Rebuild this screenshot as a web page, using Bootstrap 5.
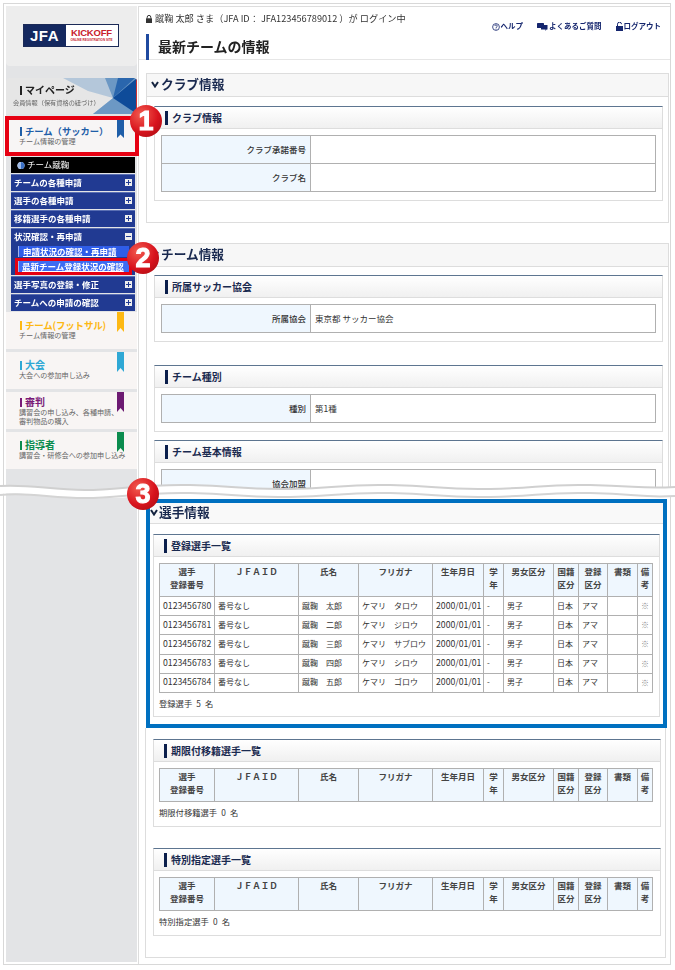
<!DOCTYPE html>
<html lang="ja">
<head>
<meta charset="utf-8">
<title>最新チームの情報</title>
<link href="https://cdn.jsdelivr.net/npm/bootstrap@5.3.0/dist/css/bootstrap.min.css" rel="stylesheet">
<style>
html,body{background:#fff;margin:0;}
body{font-family:"Noto Sans CJK JP","Liberation Sans",sans-serif;font-size:8px;color:#333;line-height:1.2;}
.shot{position:relative;width:675px;height:970px;overflow:hidden;filter:blur(.4px);}
.frame{margin:3px 0 0 3px;width:668px;height:962px;border:1px solid #d8d8d8;padding-top:2px;}
.side{width:131px;margin-left:2px;background:#e3e4e6;flex:none;height:956px;}
.logo-zone{height:60px;background:#ededed;border-radius:0 0 4px 4px;padding:0 2px 2px 0;}
.logo{width:96px;height:23px;border:1px solid #1b2a57;background:#fff;}
.logo-l{width:42px;background:#14285f;color:#fff;font:700 15px/21px "Liberation Sans",sans-serif;letter-spacing:.5px;text-align:center;}
.logo-r{flex:1;text-align:center;color:#c8202c;font:700 9.5px/11px "Liberation Sans",sans-serif;padding-top:2px;letter-spacing:-.2px;}
.logo-r span{display:block;font-size:3px;line-height:4px;letter-spacing:0;}
.mypage{position:relative;height:36px;margin-top:12px;background:#e6e6e6;overflow:hidden;border-radius:4px 4px 0 0;padding:6px 0 0 14px;}
.mypage svg{position:absolute;right:0;top:0;}
.mypage .ttl,.mypage .dsc{position:relative;}
.ttl{font-weight:700;font-size:10px;line-height:12px;white-space:nowrap;}
.ttl::before{content:"";display:inline-block;width:2px;height:9px;background:currentColor;margin-right:3px;vertical-align:-1px;}
.dsc{font-size:7.1px;line-height:8.5px;color:#666;white-space:nowrap;margin-left:-1px;}
.mypage .ttl{color:#222;}
.mypage .dsc{font-size:6.2px;margin:3px 0 0 -7px;}
.tile{position:relative;height:37px;margin-bottom:3px;background:#f8f5f4;padding:7px 0 0 14px;}
.tile-high{padding-top:4px;}
.rib{position:absolute;right:13px;top:0;width:7px;height:20px;clip-path:polygon(0 0,100% 0,100% 100%,50% 80%,0 100%);}
.tile-soccer{height:40px;margin:2px 0 0 -1px;width:134px;border:4px solid #e60012;padding:5px 0 0 11px;background:#f7f5f5;}
.tile-soccer .ttl{font-size:9.3px;}
.tile-soccer .rib{right:11px;top:0;height:18px;}
.futsal{font-size:9.5px;letter-spacing:-.2px;}
.c-soc{color:#1f5ea8;}.bg-soc{background:#1f5ea8;}
.c-fut{color:#fdb813;}.bg-fut{background:#fdb813;}
.c-tai{color:#2fa8d5;}.bg-tai{background:#2fa8d5;}
.c-shi{color:#7a1a78;}.bg-shi{background:#6c1a72;}
.c-gui{color:#0b8c4e;}.bg-gui{background:#0b8c4e;}
.side-menu{margin:0 2px 0 5px;width:124px;}
.team-bar{height:16px;margin-top:1px;background:#000;color:#fff;font-size:8.5px;line-height:15px;padding-left:6px;}
.team-bar svg{vertical-align:-2px;margin-right:2px;}
.mi{display:flex;justify-content:space-between;align-items:center;height:17px;margin-top:1px;background:#213a92;color:#fff;font-weight:700;font-size:8.5px;padding:0 3px 1px 3px;border-top:1px solid #5a6fb3;}
.pm{width:7px;height:7px;background:#eee;position:relative;flex:none;}
.pm::before{content:"";position:absolute;left:1px;right:1px;top:3px;height:1px;background:#213a92;}
.pm.plus::after{content:"";position:absolute;top:1px;bottom:1px;left:3px;width:1px;background:#213a92;}
.subwrap{background:#213a92;height:30px;padding:1px 6px 0 7px;}
.si{display:block;height:11px;line-height:11px;background:#2f5de8;color:#fff;font-weight:700;font-size:8.5px;padding-left:4px;white-space:nowrap;border-left:1px solid #9fb4ee;}
.si.on{margin-top:4px;outline:3px solid #e60012;background:#3d6cf2;padding-left:3px;}
.tiles{margin-top:1px;}
.mainc{flex:1;min-width:0;margin-left:1px;border-left:1px solid #ddd;border-top:1px solid #ddd;background:#fff;}
.top-cut{height:485px;overflow:hidden;padding-left:7px;}
.head-row{height:53px;margin:0 0 13px -7px;padding-left:7px;border-bottom:1px solid #e6e6e6;position:relative;}
.login{padding:6px 0 0 0;font-size:9.2px;line-height:11px;color:#333;white-space:nowrap;}
.login svg{vertical-align:-1px;margin-right:3px;}
.links{gap:14px;padding:14px 9px 0 0;color:#15266e;font-weight:700;font-size:7.5px;line-height:10px;}
.links a{color:inherit;text-decoration:none;}
.links svg{vertical-align:-1.5px;margin-right:1px;}
.ptitle{height:26px;border-left:3px solid #1f4aa0;padding-left:9px;font-size:14px;font-weight:700;line-height:24px;color:#222;position:absolute;top:27px;left:7px;white-space:nowrap;}
.sec-head{height:24px;width:523px;background:#f7f7f7;border:1px solid #ddd;font-size:12.7px;font-weight:700;color:#1a2a50;padding:0 0 2px 4px;display:flex;align-items:center;gap:2px;}
.sec-body{width:523px;border:1px solid #ddd;border-top:0;padding:9px 5px 0 7px;}
.pnl{border:1px solid #ddd;border-top:1px solid #5d7590;border-radius:0;}
.pnl .card-header{height:22px;padding:0 0 0 10px;background:linear-gradient(#fff,#f0f0f0);border:0;border-bottom:1px solid #ddd;border-radius:0;font-size:10px;font-weight:700;color:#1a2a50;display:flex;align-items:center;gap:4px;}
.pnl .card-header::before{content:"";width:3px;height:14px;background:#0b1f4c;flex:none;}
.pnl .card-body{padding:6px 6px 8px 6px;}
.dtbl{margin:0;table-layout:fixed;width:100%;border:1px solid #a5a5a5;font-size:8.5px;}
.dtbl th,.dtbl td{border:1px solid #b0b0b0;padding:0 4px;box-shadow:none;color:#333;height:28px;background:#fff;vertical-align:middle;}
.dtbl th{width:149px;background:#eff7fe;text-align:right;font-weight:500;font-size:8.5px;}
.sec-a{padding-bottom:21px;margin-bottom:20px;}
.sec-b{height:300px;padding-top:8px;}
.sp-a{margin-bottom:23px;}
.sp-b{margin-bottom:8px;}
.ltbl{margin:0;table-layout:fixed;width:493px;border:1px solid #a5a5a5;font-size:8px;}
.ltbl th,.ltbl td{border:1px solid #b0b0b0;padding:0 3px;color:#333;background:#fff;white-space:nowrap;vertical-align:middle;overflow:hidden;}
.ltbl th{background:#eff7fe;height:33px;text-align:center;font-weight:700;font-size:8.5px;line-height:13px;white-space:normal;padding:1px 2px 0;vertical-align:top;color:#444;}
.ltbl td{height:19.2px;line-height:12px;padding-bottom:1px;}
.ltbl td.num{font-size:8.7px;}
.ltbl td.ctr{text-align:center;color:#888;padding:0;}
.c1{width:55px}.c2{width:84px}.c3{width:60px}.c4{width:74px}.c5{width:51px}.c6{width:20px}.c7{width:50px}.c8{width:25px}.c9{width:29px}.c10{width:30px}.c11{width:15px}
.blue{margin:7px 0 0 7px;width:521px;height:229px;border:4px solid #0070c0;background:#fff;}
.blue .sec-head{width:auto;border:0;border-bottom:1px solid #ddd;height:21px;padding-left:0;gap:1px;background:#f9f9f9;}
.blue .pnl{margin:10px 3px 0 3px;height:183px;}
.pcard .card-body{padding:6px 7px 0 5px;}
.cnt{margin-top:4px;font-size:8.3px;line-height:12px;color:#333;}
.lower{margin-left:6px;width:521px;height:230px;border:1px solid #ddd;border-top:0;padding:11px 4px 0 7px;}
.lower .pnl{height:88px;margin-bottom:21px;}
.wave{position:absolute;left:0;top:482px;}
.badge-num{position:absolute;width:32px;height:32px;border-radius:50%;background:radial-gradient(circle at 35% 30%,#f25c50,#d8131d 55%,#a00b10);color:#fff;font:700 27px/32px "Liberation Sans",sans-serif;text-align:center;-webkit-text-stroke:1px #fff;}
.b1{left:130px;top:105px;}.b2{left:127px;top:242px;}.b3{left:127px;top:478px;}
</style>
</head>
<body>
<div class="shot">
<div class="frame d-flex">
  <aside class="side">
    <div class="logo-zone d-flex align-items-center justify-content-center">
      <div class="logo d-flex"><div class="logo-l">JFA</div><div class="logo-r">KICKOFF<span>ONLINE REGISTRATION SITE</span></div></div>
    </div>
    <div class="mypage">
      <svg width="74" height="36" viewBox="0 0 74 36"><polygon points="0,0 74,0 74,36 30,36 50,20 25,13" fill="#b4c7da"/><polygon points="42,0 74,0 74,36 30,36 50,20" fill="#6c98c4"/><polygon points="50,20 74,0 74,36" fill="#0e4b99"/><polygon points="50,20 55,0 72,0" fill="#2a66ad"/><rect x="73" width="1" height="36" fill="#c33"/></svg>
      <div class="ttl">マイページ</div>
      <div class="dsc">会員情報（保有資格の紐づけ）</div>
    </div>
    <div class="tile tile-soccer">
      <div class="ttl c-soc">チーム（サッカー）</div>
      <div class="dsc">チーム情報の管理</div>
      <div class="rib bg-soc"></div>
    </div>
    <div class="side-menu">
      <div class="team-bar"><svg width="8" height="9" viewBox="0 0 8 9"><circle cx="4" cy="4.5" r="3.5" fill="#fff"/><path d="M4 1a3.5 3.5 0 0 1 0 7z" fill="#3a6fc4"/><path d="M4 1a3.5 3.5 0 0 0 0 7z" fill="#9db9e6"/></svg>チーム蹴鞠</div>
      <div class="mi">チームの各種申請<span class="pm plus"></span></div>
      <div class="mi">選手の各種申請<span class="pm plus"></span></div>
      <div class="mi">移籍選手の各種申請<span class="pm plus"></span></div>
      <div class="mi">状況確認・再申請<span class="pm"></span></div>
      <div class="subwrap"><a class="si">申請状況の確認・再申請</a><a class="si on">最新チーム登録状況の確認</a></div>
      <div class="mi">選手写真の登録・修正<span class="pm plus"></span></div>
      <div class="mi">チームへの申請の確認<span class="pm plus"></span></div>
    </div>
    <div class="tiles">
      <div class="tile"><div class="ttl c-fut futsal">チーム(フットサル)</div><div class="dsc">チーム情報の管理</div><div class="rib bg-fut"></div></div>
      <div class="tile"><div class="ttl c-tai">大会</div><div class="dsc">大会への参加申し込み</div><div class="rib bg-tai"></div></div>
      <div class="tile tile-high"><div class="ttl c-shi">審判</div><div class="dsc">講習会の申し込み、各種申請、<br>審判物品の購入</div><div class="rib bg-shi"></div></div>
      <div class="tile"><div class="ttl c-gui">指導者</div><div class="dsc">講習会・研修会への参加申し込み</div><div class="rib bg-gui"></div></div>
    </div>
  </aside>
  <main class="mainc">
    <div class="top-cut">
      <div class="head-row d-flex justify-content-between">
        <div class="login"><svg width="6" height="8" viewBox="0 0 6 8"><path d="M1.2 3.5V2.2a1.8 1.8 0 0 1 3.6 0v1.3" fill="none" stroke="#333"/><rect y="3.3" width="6" height="4.7" fill="#333"/></svg>蹴鞠 太郎 さま（JFA ID： JFA123456789012 ）が ログイン中</div>
        <div class="links d-flex">
          <a href="#"><svg width="8" height="8" viewBox="0 0 8 8"><circle cx="4" cy="4" r="3.4" fill="none" stroke="#15266e" stroke-width=".8"/><path d="M2.8 3a1.2 1.2 0 1 1 1.6 1.2L4 5" fill="none" stroke="#15266e" stroke-width=".8"/><circle cx="4" cy="6" r=".5" fill="#15266e"/></svg>ヘルプ</a>
          <a href="#"><svg width="11" height="8" viewBox="0 0 11 8"><rect width="7" height="5" rx=".6" fill="#15266e"/><path d="M4 2h6.5v4.5H9.5L8.5 8V6.5H4z" fill="#15266e"/></svg>よくあるご質問</a>
          <a href="#"><svg width="7" height="9" viewBox="0 0 7 9"><path d="M1.5 4V2.2a2 2 0 0 1 4 0" fill="none" stroke="#15266e"/><rect y="4" width="7" height="5" fill="#15266e"/></svg>ログアウト</a>
        </div>
        <div class="ptitle">最新チームの情報</div>
      </div>
      <div class="sec-head"><svg width="8" height="7" viewBox="0 0 8 7"><path d="M1 1l3 4.5L7 1" fill="none" stroke="#14233f" stroke-width="2"/></svg>クラブ情報</div>
      <div class="sec-body sec-a">
        <div class="card pnl">
          <div class="card-header">クラブ情報</div>
          <div class="card-body">
            <table class="table dtbl"><tr><th>クラブ承諾番号</th><td></td></tr><tr><th>クラブ名</th><td></td></tr></table>
          </div>
        </div>
      </div>
      <div class="sec-head"><svg width="8" height="7" viewBox="0 0 8 7"><path d="M1 1l3 4.5L7 1" fill="none" stroke="#14233f" stroke-width="2"/></svg>チーム情報</div>
      <div class="sec-body sec-b">
        <div class="card pnl sp-a">
          <div class="card-header">所属サッカー協会</div>
          <div class="card-body"><table class="table dtbl"><tr><th>所属協会</th><td>東京都 サッカー協会</td></tr></table></div>
        </div>
        <div class="card pnl sp-b">
          <div class="card-header">チーム種別</div>
          <div class="card-body"><table class="table dtbl"><tr><th>種別</th><td>第1種</td></tr></table></div>
        </div>
        <div class="card pnl">
          <div class="card-header">チーム基本情報</div>
          <div class="card-body"><table class="table dtbl"><tr><th>協会加盟</th><td></td></tr></table></div>
        </div>
      </div>
    </div>
    <section class="blue">
      <div class="sec-head"><svg width="8" height="7" viewBox="0 0 8 7"><path d="M1 1l3 4.5L7 1" fill="none" stroke="#14233f" stroke-width="2"/></svg>選手情報</div>
      <div class="card pnl pcard">
        <div class="card-header">登録選手一覧</div>
        <div class="card-body">
          <table class="table ltbl">
            <colgroup><col class="c1"><col class="c2"><col class="c3"><col class="c4"><col class="c5"><col class="c6"><col class="c7"><col class="c8"><col class="c9"><col class="c10"><col class="c11"></colgroup>
            <tr><th>選手<br>登録番号</th><th>ＪＦＡＩＤ</th><th>氏名</th><th>フリガナ</th><th>生年月日</th><th>学年</th><th>男女区分</th><th>国籍区分</th><th>登録区分</th><th>書類</th><th>備考</th></tr>
            <tr><td class="num">0123456780</td><td>番号なし</td><td>蹴鞠　太郎</td><td>ケマリ　タロウ</td><td class="num">2000/01/01</td><td>-</td><td>男子</td><td>日本</td><td>アマ</td><td></td><td class="ctr">※</td></tr>
            <tr><td class="num">0123456781</td><td>番号なし</td><td>蹴鞠　二郎</td><td>ケマリ　ジロウ</td><td class="num">2000/01/01</td><td>-</td><td>男子</td><td>日本</td><td>アマ</td><td></td><td class="ctr">※</td></tr>
            <tr><td class="num">0123456782</td><td>番号なし</td><td>蹴鞠　三郎</td><td>ケマリ　サブロウ</td><td class="num">2000/01/01</td><td>-</td><td>男子</td><td>日本</td><td>アマ</td><td></td><td class="ctr">※</td></tr>
            <tr><td class="num">0123456783</td><td>番号なし</td><td>蹴鞠　四郎</td><td>ケマリ　シロウ</td><td class="num">2000/01/01</td><td>-</td><td>男子</td><td>日本</td><td>アマ</td><td></td><td class="ctr">※</td></tr>
            <tr><td class="num">0123456784</td><td>番号なし</td><td>蹴鞠　五郎</td><td>ケマリ　ゴロウ</td><td class="num">2000/01/01</td><td>-</td><td>男子</td><td>日本</td><td>アマ</td><td></td><td class="ctr">※</td></tr>
          </table>
          <div class="cnt">登録選手&ensp;5&ensp;名</div>
        </div>
      </div>
    </section>
    <div class="lower">
      <div class="card pnl pcard">
        <div class="card-header">期限付移籍選手一覧</div>
        <div class="card-body">
          <table class="table ltbl">
            <colgroup><col class="c1"><col class="c2"><col class="c3"><col class="c4"><col class="c5"><col class="c6"><col class="c7"><col class="c8"><col class="c9"><col class="c10"><col class="c11"></colgroup>
            <tr><th>選手<br>登録番号</th><th>ＪＦＡＩＤ</th><th>氏名</th><th>フリガナ</th><th>生年月日</th><th>学年</th><th>男女区分</th><th>国籍区分</th><th>登録区分</th><th>書類</th><th>備考</th></tr>
          </table>
          <div class="cnt">期限付移籍選手&ensp;0&ensp;名</div>
        </div>
      </div>
      <div class="card pnl pcard">
        <div class="card-header">特別指定選手一覧</div>
        <div class="card-body">
          <table class="table ltbl">
            <colgroup><col class="c1"><col class="c2"><col class="c3"><col class="c4"><col class="c5"><col class="c6"><col class="c7"><col class="c8"><col class="c9"><col class="c10"><col class="c11"></colgroup>
            <tr><th>選手<br>登録番号</th><th>ＪＦＡＩＤ</th><th>氏名</th><th>フリガナ</th><th>生年月日</th><th>学年</th><th>男女区分</th><th>国籍区分</th><th>登録区分</th><th>書類</th><th>備考</th></tr>
          </table>
          <div class="cnt">特別指定選手&ensp;0&ensp;名</div>
        </div>
      </div>
    </div>
  </main>
</div>
<svg class="wave" width="675" height="20" viewBox="0 0 675 20"><path d="M0 4 C30 2 50 8 85 8 S140 2 190 3 S240 8 290 7 S340 2 390 3 S440 8 490 7 S540 2 590 3 S640 7 675 5 V14 C640 16 610 11 590 11 S540 17 490 15 S440 10 390 11 S340 16 290 15 S240 10 190 11 S140 17 85 16 S30 10 0 12Z" fill="#fff"/><path d="M0 4 C30 2 50 8 85 8 S140 2 190 3 S240 8 290 7 S340 2 390 3 S440 8 490 7 S540 2 590 3 S640 7 675 5" fill="none" stroke="#d0d0d0" stroke-width="2"/><path d="M0 13 C30 10 50 16 85 16 S140 10 190 11 S240 16 290 15 S340 10 390 11 S440 16 490 15 S540 10 590 11 S640 16 675 14" fill="none" stroke="#d4d4d4" stroke-width="2"/></svg>
<div class="badge-num b1">1</div>
<div class="badge-num b2">2</div>
<div class="badge-num b3">3</div>
</div>
</body>
</html>
